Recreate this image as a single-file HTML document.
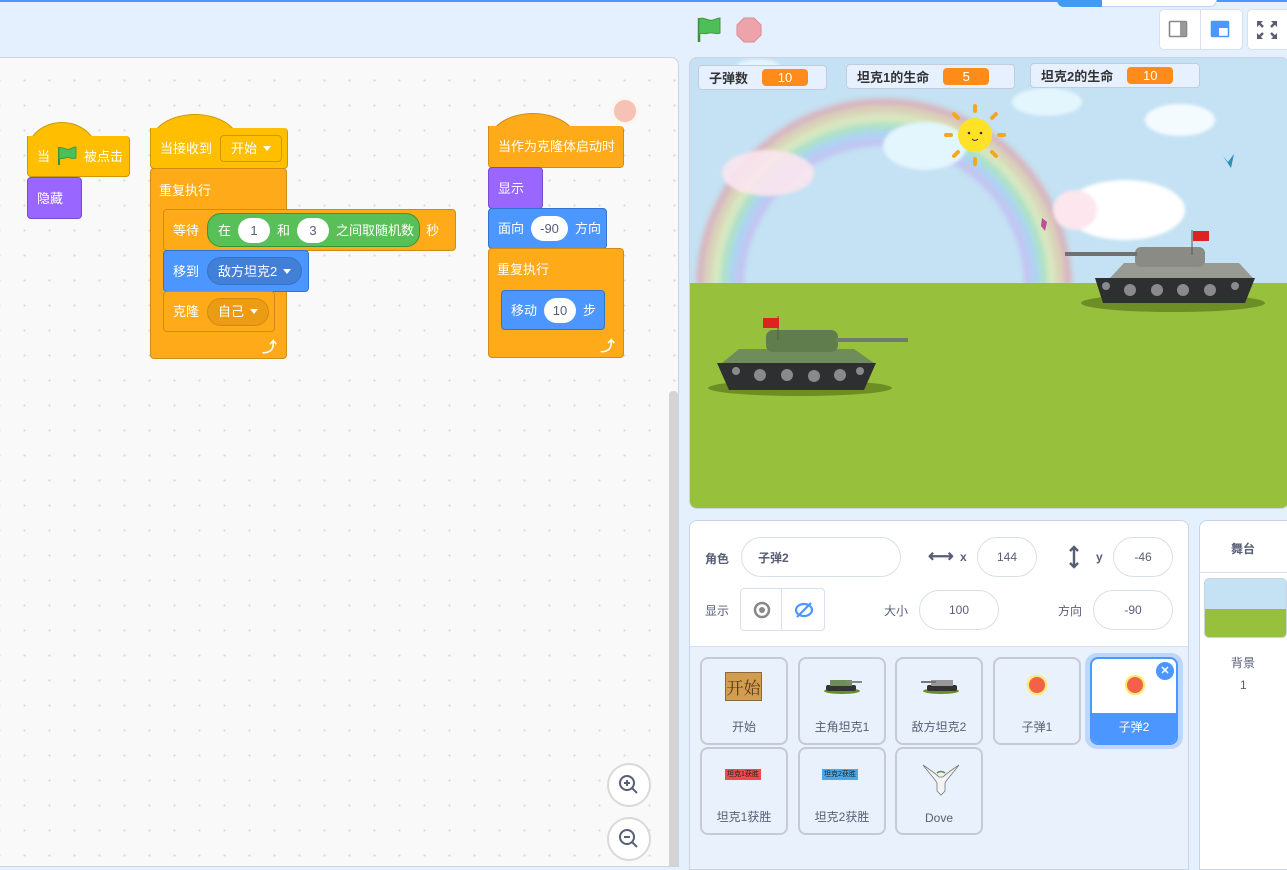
<!DOCTYPE html>
<html><head><meta charset="utf-8"><style>
*{box-sizing:border-box;margin:0;padding:0}
body{width:1287px;height:860px;overflow:hidden;background:#e5f0ff;font-family:"Liberation Sans","Noto Sans CJK SC",sans-serif;position:relative}
.abs{position:absolute}
#topline{left:0;top:0;width:1287px;height:2px;background:#4c97ff}
#code{left:-1px;top:57px;width:680px;height:810px;background-color:#f9f9f9;border:1px solid #c8d4e4;border-radius:0 8px 0 0;
background-image:radial-gradient(circle,#d9d9d9 1px,transparent 1.3px);background-size:25px 25px;background-position:12px 10px;overflow:hidden}
.b{position:absolute;color:#fff;font-size:13px;line-height:1;display:flex;align-items:center;padding-left:9px;border-radius:4px;white-space:nowrap}
.ev{background:#ffbf00;border:1px solid #cc9900}
.ct{background:#ffab19;border:1px solid #cf8b17}
.lk{background:#9966ff;border:1px solid #774dcb}
.mo{background:#4c97ff;border:1px solid #3373cc}
.op{background:#59c059;border:1px solid #389438;border-radius:20px}
.hat{position:absolute;border-radius:50% 50% 0 0/100% 100% 0 0}
.ov{background:#fff;color:#575e75;border-radius:14px;height:25px;display:inline-flex;align-items:center;justify-content:center;margin:0 7px}
.dd{display:inline-flex;align-items:center;height:28px;border-radius:14px;padding:0 10px;margin-left:8px}
.tri{display:inline-block;width:0;height:0;border-left:4px solid transparent;border-right:4px solid transparent;border-top:5px solid #fff;margin-left:6px}
.mon{position:absolute;background:#e6f0ff;border:1px solid #c3ccd9;border-radius:4px;height:25px;font-size:13px;font-weight:bold;color:#333;display:flex;align-items:center;padding-left:10px}
.val{background:#ff8c1a;color:#fff;font-weight:normal;border-radius:4px;height:17px;width:46px;display:flex;align-items:center;justify-content:center;margin-left:14px;font-size:13px}
.inp{position:absolute;background:#fff;border:1px solid #d9dfe8;border-radius:20px;height:40px;display:flex;align-items:center;justify-content:center;font-size:12px;color:#575e75}
.lbl{position:absolute;font-size:12px;color:#575e75}
.tile{position:absolute;width:88px;height:88px;border:2px solid #c5cbd6;border-radius:8px;background:#e9f1fc;font-size:12px;color:#575e75}
.tile .n{position:absolute;bottom:8px;width:100%;text-align:center}
</style></head><body>
<div class="abs" id="topline"></div>
<div class="abs" style="left:1057px;top:0;width:160px;height:7px;background:#fff;border:1px solid #b9d3f5;border-top:none;border-radius:0 0 8px 8px"></div>
<div class="abs" style="left:1057px;top:0;width:45px;height:7px;background:#3f9bf5;border-radius:0 0 0 8px"></div>

<svg class="abs" style="left:696px;top:16px" width="28" height="28" viewBox="0 0 28 28"><path d="M3 2 V26" stroke="#3a8f3a" stroke-width="2.5"/><path d="M3 3 C8 0 12 6 17 4 C20 3 22 2 24 2 V17 C20 19 17 16 13 17 C8 19 6 16 3 18Z" fill="#4cbf56" stroke="#45993d" stroke-width="1"/></svg>
<svg class="abs" style="left:735px;top:16px" width="28" height="28" viewBox="0 0 28 28"><polygon points="9,2 19,2 26,9 26,19 19,26 9,26 2,19 2,9" fill="#eca3aa" stroke="#e08a93" stroke-width="1"/></svg>
<div class="abs" style="left:1159px;top:9px;width:84px;height:41px;background:#fff;border:1px solid #d6e0ee;border-radius:5px"></div>
<div class="abs" style="left:1200px;top:9px;width:1px;height:41px;background:#d6e0ee"></div>
<svg class="abs" style="left:1168px;top:20px" width="22" height="20"><rect x="1.5" y="1.5" width="17" height="15" fill="none" stroke="#888" stroke-width="1.6" rx="1"/><rect x="12" y="2" width="6" height="14" fill="#999"/></svg>
<svg class="abs" style="left:1210px;top:20px" width="22" height="20"><rect x="1.5" y="1.5" width="17" height="15" fill="none" stroke="#4c97ff" stroke-width="1.6" rx="1"/><rect x="2" y="2" width="7" height="14" fill="#4c97ff"/><rect x="9" y="2" width="9" height="6" fill="#4c97ff"/></svg>
<div class="abs" style="left:1247px;top:9px;width:45px;height:41px;background:#fff;border:1px solid #d6e0ee;border-radius:5px"></div>
<svg class="abs" style="left:1256px;top:20px" width="22" height="20" viewBox="0 0 22 20"><g stroke="#575e75" stroke-width="2.4" fill="none"><path d="M2 2l5 5M2 18l5-5M20 2l-5 5M20 18l-5-5"/></g><g fill="#575e75"><path d="M1 1h6l-6 6zM1 19h6l-6-6zM21 1h-6l6 6zM21 19h-6l6-6z"/></g></svg>

<div class="abs" id="code">
<div style="position:absolute;left:669px;top:333px;width:9px;height:480px;background:#d4d4d4;border-radius:4px"></div>
</div>
<div class="abs" style="left:614px;top:100px;width:22px;height:22px;border-radius:50%;background:#f6c2b6;box-shadow:0 0 4px #fde8c8"></div>

<div class="hat ev" style="left:27px;top:122px;width:70px;height:30px;border-bottom:none"></div>
<div class="b ev" style="left:27px;top:136px;width:103px;height:41px;border-radius:0 4px 4px 4px;border-top:none">当 <svg width="22" height="20" style="margin:0 6px" viewBox="0 0 22 20"><path d="M3 1V19" stroke="#3a8f3a" stroke-width="2"/><path d="M3 2C7 0 10 5 14 3C16 2 18 1 20 1V12C16 14 13 10 9 12C6 13 5 12 3 13Z" fill="#4cbf56" stroke="#45993d"/></svg> 被点击</div>
<div class="b lk" style="left:27px;top:177px;width:55px;height:42px">隐藏</div>

<div class="hat ev" style="left:150px;top:114px;width:90px;height:30px;border-bottom:none"></div>
<div class="b ev" style="left:150px;top:128px;width:138px;height:41px;border-radius:0 4px 4px 4px;border-top:none">当接收到<span class="dd" style="background:#ffbf00;border:1px solid #cc9900;border-radius:4px;height:27px">开始<span class="tri"></span></span></div>
<div class="abs ct" style="left:150px;top:168px;width:137px;height:191px;border-radius:4px"></div>
<div class="b" style="left:150px;top:170px;height:40px;background:none">重复执行</div>
<div class="abs" style="left:262px;top:336px;color:#fff;font-size:15px;font-weight:bold">⤴</div>
<div class="b ct" style="left:163px;top:209px;width:293px;height:42px">等待<span class="dd op" style="height:34px;padding:0 5px 0 10px;margin-left:8px">在<span class="ov" style="width:32px">1</span>和<span class="ov" style="width:32px">3</span>之间取随机数</span><span style="margin-left:6px">秒</span></div>
<div class="b mo" style="left:163px;top:250px;width:146px;height:42px">移到<span class="dd" style="background:#4280d7;border:1px solid #3373cc">敌方坦克2<span class="tri"></span></span></div>
<div class="b ct" style="left:163px;top:291px;width:112px;height:41px">克隆<span class="dd" style="background:#ec9c13;border:1px solid #cf8b17">自己<span class="tri"></span></span></div>

<div class="hat ct" style="left:488px;top:113px;width:90px;height:30px;border-bottom:none"></div>
<div class="b ct" style="left:488px;top:126px;width:136px;height:42px;border-radius:0 4px 4px 4px;border-top:none">当作为克隆体启动时</div>
<div class="b lk" style="left:488px;top:167px;width:55px;height:42px">显示</div>
<div class="b mo" style="left:488px;top:208px;width:119px;height:41px">面向<span class="ov" style="width:37px">-90</span>方向</div>
<div class="abs ct" style="left:488px;top:248px;width:136px;height:110px;border-radius:4px"></div>
<div class="b" style="left:488px;top:249px;height:40px;background:none">重复执行</div>
<div class="abs" style="left:600px;top:335px;color:#fff;font-size:15px;font-weight:bold">⤴</div>
<div class="b mo" style="left:501px;top:290px;width:104px;height:40px">移动<span class="ov" style="width:32px">10</span>步</div>

<svg class="abs" style="left:606px;top:762px" width="46" height="46"><circle cx="23" cy="23" r="21" fill="#fff" stroke="#d9d9d9" stroke-width="2"/><circle cx="21" cy="21" r="7" fill="none" stroke="#575e75" stroke-width="2"/><path d="M26 26l5 5M18 21h6M21 18v6" stroke="#575e75" stroke-width="2"/></svg>
<svg class="abs" style="left:606px;top:816px" width="46" height="46"><circle cx="23" cy="23" r="21" fill="#fff" stroke="#d9d9d9" stroke-width="2"/><circle cx="21" cy="21" r="7" fill="none" stroke="#575e75" stroke-width="2"/><path d="M26 26l5 5M18 21h6" stroke="#575e75" stroke-width="2"/></svg>

<!-- stage -->
<div class="abs" style="left:689px;top:57px;width:600px;height:452px;border:1px solid #c8d4e4;border-radius:8px;overflow:hidden;background:#c4e2f3">
<svg width="600" height="452" viewBox="0 0 600 452" style="position:absolute;left:0;top:0">
<defs><filter id="bl"><feGaussianBlur stdDeviation="3"/></filter><filter id="bl2"><feGaussianBlur stdDeviation="1.5"/></filter></defs>
<g filter="url(#bl)" fill="none" opacity="0.5" stroke-width="7">
<path d="M10 228 A184 184 0 0 1 378 228" stroke="#f08080"/>
<path d="M18 228 A176 176 0 0 1 370 228" stroke="#f5c070"/>
<path d="M26 228 A168 168 0 0 1 362 228" stroke="#f0f080"/>
<path d="M34 228 A160 160 0 0 1 354 228" stroke="#90e090"/>
<path d="M42 228 A152 152 0 0 1 346 228" stroke="#90c0f0"/>
<path d="M50 228 A144 144 0 0 1 338 228" stroke="#c0a0f0"/>
</g>
<g filter="url(#bl2)">
<ellipse cx="78" cy="115" rx="46" ry="23" fill="#fbe6f0" opacity="0.9"/>
<ellipse cx="235" cy="88" rx="42" ry="24" fill="#e3f5fd"/>
<ellipse cx="357" cy="44" rx="35" ry="14" fill="#e3f5fd"/>
<ellipse cx="490" cy="62" rx="35" ry="16" fill="#f4fbff"/>
<ellipse cx="68" cy="9" rx="22" ry="8" fill="#e3f5fd"/>
<ellipse cx="435" cy="152" rx="60" ry="30" fill="#fff"/>
<ellipse cx="385" cy="152" rx="22" ry="20" fill="#fde6ee"/>
</g>
<g transform="translate(285,77)"><g stroke="#f5a623" stroke-width="4" stroke-linecap="round"><path d="M0-24v-5M0 24v5M-24 0h-5M24 0h5M17-17l4-4M-17 17l-4 4M17 17l4 4M-17-17l-4-4"/></g><circle r="17" fill="#ffe227"/><circle cx="-6" cy="-2" r="1.3" fill="#333"/><circle cx="6" cy="-2" r="1.3" fill="#333"/><path d="M-3 4q3 3 6 0" stroke="#333" fill="none"/></g>
<path d="M533 98l5 6 6-8-3 14z" fill="#2c8fbd"/>
<path d="M352 160l5 4-2 9-4-5z" fill="#c04ca0"/>
<rect x="0" y="225" width="600" height="230" fill="#97c03d"/>
<ellipse cx="483" cy="245" rx="92" ry="9" fill="#6d8d25"/>
<path d="M405 220h160l-10 25h-142z" fill="#2d2f30"/>
<g fill="#8a8a8a"><circle cx="416" cy="228" r="4"/><circle cx="440" cy="232" r="6"/><circle cx="467" cy="232" r="6"/><circle cx="493" cy="232" r="6"/><circle cx="520" cy="232" r="6"/><circle cx="545" cy="228" r="4"/></g>
<path d="M420 220l14-15h115l14 15z" fill="#9a9a94"/>
<rect x="445" y="189" width="70" height="20" rx="6" fill="#8b8b85"/>
<rect x="375" y="194" width="72" height="4" fill="#707070"/>
<path d="M502 172v25" stroke="#555"/><rect x="503" y="173" width="16" height="10" fill="#d22"/>
<ellipse cx="110" cy="330" rx="92" ry="8" fill="#6d8d25"/>
<path d="M27 305h159l-12 27h-135z" fill="#2d2f30"/>
<g fill="#8a8a8a"><circle cx="46" cy="313" r="4"/><circle cx="70" cy="317" r="6"/><circle cx="97" cy="317" r="6"/><circle cx="124" cy="318" r="6"/><circle cx="150" cy="317" r="6"/><circle cx="170" cy="313" r="4"/></g>
<path d="M32 305l17-14h115l20 14z" fill="#6e8d5a"/>
<rect x="76" y="272" width="72" height="22" rx="7" fill="#5f7d4d"/>
<rect x="146" y="280" width="72" height="4" fill="#707a70"/>
<path d="M88 258v24" stroke="#555"/><rect x="73" y="260" width="16" height="10" fill="#d22"/>
</svg>
</div>
<div class="mon" style="left:698px;top:65px;width:129px">子弹数<span class="val">10</span></div>
<div class="mon" style="left:846px;top:64px;width:169px">坦克1的生命<span class="val">5</span></div>
<div class="mon" style="left:1030px;top:63px;width:170px">坦克2的生命<span class="val">10</span></div>

<div class="abs" style="left:689px;top:520px;width:500px;height:350px;background:#e9f1fc;border:1px solid #c8d4e4;border-radius:8px 8px 0 0;overflow:hidden">
<div style="position:absolute;left:0;top:0;width:100%;height:126px;background:#fff;border-bottom:1px solid #d6e0ee"></div>
</div>
<div class="lbl" style="left:705px;top:550px;font-weight:bold">角色</div>
<div class="inp" style="left:741px;top:537px;width:160px;justify-content:flex-start;padding-left:16px;font-weight:bold">子弹2</div>
<div class="lbl" style="left:928px;top:546px;font-size:18px;font-weight:bold">⟷</div>
<div class="lbl" style="left:960px;top:550px;font-weight:bold">x</div>
<div class="inp" style="left:977px;top:537px;width:60px">144</div>
<svg class="abs" style="left:1068px;top:545px" width="12" height="24"><path d="M6 2v20M2 6l4-4 4 4M2 18l4 4 4-4" stroke="#575e75" stroke-width="2.4" fill="none"/></svg>
<div class="lbl" style="left:1096px;top:550px;font-weight:bold">y</div>
<div class="inp" style="left:1113px;top:537px;width:60px">-46</div>
<div class="lbl" style="left:705px;top:602px">显示</div>
<div class="abs" style="left:740px;top:588px;width:85px;height:43px;border:1px solid #d6e0ee;border-radius:4px;background:#fff"></div>
<div class="abs" style="left:781px;top:588px;width:1px;height:43px;background:#d6e0ee"></div>
<svg class="abs" style="left:752px;top:600px" width="20" height="20"><circle cx="10" cy="10" r="7" fill="none" stroke="#888" stroke-width="2.5"/><circle cx="10" cy="10" r="3" fill="#888"/></svg>
<svg class="abs" style="left:793px;top:599px" width="22" height="22"><ellipse cx="11" cy="11" rx="8" ry="6" fill="none" stroke="#4c97ff" stroke-width="2.2"/><path d="M4 18L18 4" stroke="#4c97ff" stroke-width="2.2"/></svg>
<div class="lbl" style="left:884px;top:602px">大小</div>
<div class="inp" style="left:919px;top:590px;width:80px">100</div>
<div class="lbl" style="left:1058px;top:602px">方向</div>
<div class="inp" style="left:1093px;top:590px;width:80px">-90</div>

<div class="tile" style="left:700px;top:657px"><div style="position:absolute;left:23px;top:13px;width:37px;height:29px;background:#d39d50;border:1px solid #8a6a3a;font-family:'Noto Serif CJK SC',serif;font-size:17px;color:#5a3a1a;text-align:center;line-height:27px;white-space:nowrap;overflow:hidden">开始</div><div class="n">开始</div></div>
<div class="tile" style="left:798px;top:657px"><svg style="position:absolute;left:22px;top:16px" width="42" height="20"><ellipse cx="20" cy="16" rx="18" ry="3" fill="#6b8e23"/><rect x="4" y="10" width="30" height="6" rx="2" fill="#333"/><rect x="8" y="5" width="22" height="6" fill="#6e8d5a"/><rect x="25" y="6" width="15" height="2" fill="#888"/></svg><div class="n">主角坦克1</div></div>
<div class="tile" style="left:895px;top:657px"><svg style="position:absolute;left:22px;top:16px" width="42" height="20"><ellipse cx="22" cy="16" rx="18" ry="3" fill="#6b8e23"/><rect x="8" y="10" width="30" height="6" rx="2" fill="#333"/><rect x="12" y="5" width="22" height="6" fill="#999"/><rect x="2" y="6" width="15" height="2" fill="#777"/></svg><div class="n">敌方坦克2</div></div>
<div class="tile" style="left:993px;top:657px"><div style="position:absolute;left:34px;top:18px;width:16px;height:16px;border-radius:50%;background:#f4604a;box-shadow:0 0 0 2px #fdea6a,0 0 5px #fde06a"></div><div class="n">子弹1</div></div>
<div class="abs" style="left:1085px;top:653px;width:98px;height:96px;border-radius:12px;background:#bcd7fb"></div>
<div class="tile" style="left:1090px;top:657px;border:2px solid #4c97ff;background:#fff;overflow:hidden"><div style="position:absolute;left:35px;top:18px;width:16px;height:16px;border-radius:50%;background:#f4604a;box-shadow:0 0 0 2px #fdea6a,0 0 5px #fde06a"></div><div style="position:absolute;left:0;bottom:0;width:100%;height:30px;background:#4c97ff"></div><div class="n" style="color:#fff">子弹2</div></div>
<div class="abs" style="left:1156px;top:662px;width:18px;height:18px;border-radius:50%;background:#4c97ff;color:#fff;font-size:11px;font-weight:bold;text-align:center;line-height:18px">✕</div>
<div class="tile" style="left:700px;top:747px"><div style="position:absolute;left:23px;top:20px;width:36px;height:11px;background:#f04a4a;font-size:7px;color:#222;text-align:center;line-height:11px;white-space:nowrap;overflow:hidden">坦克1获胜</div><div class="n">坦克1获胜</div></div>
<div class="tile" style="left:798px;top:747px"><div style="position:absolute;left:22px;top:20px;width:36px;height:11px;background:#4aa8e8;font-size:7px;color:#222;text-align:center;line-height:11px;white-space:nowrap;overflow:hidden">坦克2获胜</div><div class="n">坦克2获胜</div></div>
<div class="tile" style="left:895px;top:747px"><svg style="position:absolute;left:24px;top:10px" width="40" height="40" viewBox="0 0 40 40"><path d="M2 6C8 10 14 14 18 18 L22 18 C26 14 32 10 38 6 C32 14 26 20 24 24 L24 32 L20 36 L16 32 L16 24 C14 20 8 14 2 6Z" fill="#f4f4f4" stroke="#777" stroke-width="0.8"/><path d="M16 14q4-3 8 0" stroke="#6a8a4a" stroke-width="1.5" fill="none"/></svg><div class="n">Dove</div></div>

<div class="abs" style="left:1199px;top:520px;width:100px;height:350px;background:#fff;border:1px solid #c8d4e4;border-radius:8px 0 0 0"></div>
<div class="abs" style="left:1199px;top:572px;width:90px;height:1px;background:#d6e0ee"></div>
<div class="lbl" style="left:1231px;top:540px;font-weight:bold">舞台</div>
<div class="abs" style="left:1204px;top:578px;width:83px;height:60px;border-radius:5px;border:1px solid #c8d4e4;overflow:hidden;background:#c4e2f3"><div style="position:absolute;top:30px;width:100%;height:30px;background:#97c03d"></div></div>
<div class="lbl" style="left:1231px;top:654px">背景</div>
<div class="lbl" style="left:1240px;top:678px">1</div>
</body></html>
